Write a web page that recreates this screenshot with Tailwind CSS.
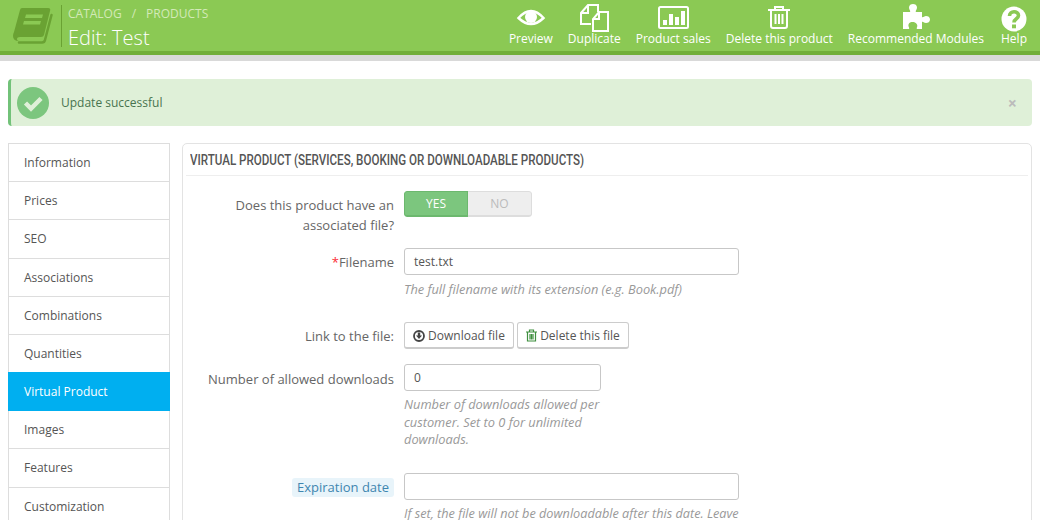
<!DOCTYPE html>
<html lang="en">
<head>
    <meta charset="UTF-8">
    <title>Edit: Test</title>
    <script src="https://cdn.jsdelivr.net/npm/@tailwindcss/browser@4"></script>
</head>
<body class="h-[520px] overflow-hidden bg-white font-['Open_Sans',sans-serif] text-[13px] text-[#666]">
    <!-- header -->
    <header class="h-[55px] flex items-start justify-between bg-[#8bc954] border-b-4 border-[#72ae3a]">
        <div class="flex items-start">
            <svg class="w-[42px] h-[37px] mt-[8px] ml-[12px]" viewBox="0 0 42 37">
                <path fill="none" stroke="#6aa233" stroke-width="2.500" stroke-linecap="round" d="M39.500 7 L33 32 Q32.500 34.500 30 34.500 H7"/>
                <path fill="#6aa233" d="M10 0 H36 Q39 0 38 3 L32 27 Q31.500 29 29 29 H8 Q5 29 5 31 Q5 33 8 33 H7 Q1 33 1 28 Q1 26 2 24 L8 2 Q8.500 0 10 0 Z"/>
                <path fill="#8bc954" d="M14 6.500 H31 L30 10 H13 Z M12 13 H29 L28 16.500 H11 Z"/>
            </svg>
            <div class="w-px h-[42px] bg-[#6aa233] mt-[5px] ml-[7px]"></div>
            <div class="ml-[6px] mt-[5px]">
                <div class="flex gap-[10px] text-[12px] leading-[17px] text-[#d3e9b8]"><span>CATALOG</span><span>/</span><span>PRODUCTS</span></div>
                <div class="text-[20px] font-light leading-[27px] mt-[2px] text-white">Edit: Test</div>
            </div>
        </div>
        <nav class="flex gap-[15px] pr-[13px] pt-[4px] text-[12px] leading-[16px] text-white">
            <a class="flex flex-col items-center">
                <svg class="w-[30px] h-[26px]" viewBox="0 0 30 26"><path fill="none" stroke="#fff" stroke-width="2.500" d="M2.500 14 Q15 0 27.500 14 Q15 26 2.500 14 Z"/><circle cx="15" cy="13" r="6" fill="#fff"/></svg>
                <span class="mt-[1px]">Preview</span>
            </a>
            <a class="flex flex-col items-center">
                <svg class="w-[30px] h-[28px] -mb-[2px]" viewBox="0 0 30 28"><path fill="none" stroke="#fff" stroke-width="2" d="M12 20 H2 V9 L9 1 H19 V8 M9 1 V9 H2 M14 27 V15 L20 8 H29 V27 Z M20 8 V15 H14"/></svg>
                <span class="mt-[1px]">Duplicate</span>
            </a>
            <a class="flex flex-col items-center">
                <svg class="w-[31px] h-[26px]" viewBox="0 0 31 26"><rect x="1" y="3" width="29" height="21" rx="1.500" fill="none" stroke="#fff" stroke-width="2"/><path fill="#fff" d="M5 16 h4 v5 h-4 Z M11 10 h4 v11 h-4 Z M17 13 h4 v8 h-4 Z M23 7 h4 v14 h-4 Z"/></svg>
                <span class="mt-[1px]">Product sales</span>
            </a>
            <a class="flex flex-col items-center">
                <svg class="w-[24px] h-[26px]" viewBox="0 0 24 26"><path fill="none" stroke="#fff" stroke-width="2" d="M1 6 H23 M4 6 V22 Q4 24 6 24 H18 Q20 24 20 22 V6 M8 6 V3 H16 V6"/><path stroke="#fff" stroke-width="2" d="M8.500 10 V20 M12 10 V20 M15.500 10 V20"/></svg>
                <span class="mt-[1px]">Delete this product</span>
            </a>
            <a class="flex flex-col items-center">
                <svg class="w-[28px] h-[26px]" viewBox="0 0 28 26"><path fill="#fff" d="M1 8 H8 C9 7 7 6 7 3.500 C7 1 9 0 11 0 C13 0 15 1 15 3.500 C15 6 13 7 14 8 H20 V13 C21 14 22 12 24 12 C26 12 28 13 28 15.500 C28 18 26 19 24 19 C22 19 21 17 20 18 V25 H15 C14 24 16 23 15 20.500 C14 18.500 12 18 10.500 18 C9 18 7 18.500 6.500 20.500 C6 23 8 24 7 25 H1 Z"/></svg>
                <span class="mt-[1px]">Recommended Modules</span>
            </a>
            <a class="flex flex-col items-center ml-[2px]">
                <svg class="w-[26px] h-[26px] mt-[2px] -mb-[2px]" viewBox="0 0 26 26"><circle cx="13" cy="13" r="12.500" fill="#fff"/><path fill="none" stroke="#8bc954" stroke-width="3.600" d="M8.500 10 C8.500 4.500 17.500 4.500 17.500 9.500 C17.500 13 13 12.500 13 16.500"/><rect x="11" y="18.500" width="4" height="3.800" fill="#8bc954"/></svg>
                <span class="mt-[1px]">Help</span>
            </a>
        </nav>
    </header>
    <div class="h-[6px] bg-[#d9d9d9]"></div>

    <main class="px-[8px] pt-[18px]">
        <!-- alert -->
        <div class="h-[47px] flex items-center bg-[#dff0d8] border-l-[3px] border-[#72c279] rounded-[4px] text-[12px] text-[#48744f]">
            <svg class="w-[32px] h-[32px] ml-[6px]" viewBox="0 0 32 32"><circle cx="16" cy="16" r="16" fill="#7cc67e"/><path fill="none" stroke="#dff0d8" stroke-width="4.500" d="M8.500 16 L14 21.500 L24 11.500"/></svg>
            <span class="ml-[12px]">Update successful</span>
            <span class="ml-auto mr-[15px] text-[16px] font-bold text-[#bbb]">×</span>
        </div>

        <div class="flex gap-[12px] mt-[17px]">
            <!-- tabs -->
            <ul class="w-[162px] h-[377px] shrink-0 border-x border-[#ddd] text-[12px] text-[#555]">
                <li class="h-[39.200px] flex items-center pl-[15px] pt-[1px] border-t border-b border-[#ddd]">Information</li>
                <li class="h-[38.200px] flex items-center pl-[15px] pt-[1px] border-b border-[#ddd]">Prices</li>
                <li class="h-[38.200px] flex items-center pl-[15px] pt-[1px] border-b border-[#ddd]">SEO</li>
                <li class="h-[38.200px] flex items-center pl-[15px] pt-[1px] border-b border-[#ddd]">Associations</li>
                <li class="h-[38.200px] flex items-center pl-[15px] pt-[1px] border-b border-[#ddd]">Combinations</li>
                <li class="h-[38.200px] flex items-center pl-[15px] pt-[1px] border-b border-[#ddd]">Quantities</li>
                <li class="h-[39.200px] -mt-px -mx-px flex items-center pl-[16px] bg-[#00aff0] text-white">Virtual Product</li>
                <li class="h-[38px] flex items-center pl-[15px] pt-[1px] border-b border-[#ddd]">Images</li>
                <li class="h-[38.200px] flex items-center pl-[15px] pt-[1px] border-b border-[#ddd]">Features</li>
                <li class="h-[38.200px] flex items-center pl-[15px] pt-[1px] border-b border-[#ddd]">Customization</li>
            </ul>

            <!-- panel -->
            <section class="flex-1 h-[420px] border border-[#e3e3e3] rounded-t-[5px] px-[3px]">
                <h3 class="h-[32px] flex items-center pl-[4px] pt-[2px] border-b border-[#eee] text-[15px] font-medium text-[#555] font-['Roboto',sans-serif]"><span class="inline-block origin-left scale-x-[.773] whitespace-nowrap">VIRTUAL PRODUCT (SERVICES, BOOKING OR DOWNLOADABLE PRODUCTS)</span></h3>

                <div class="flex mt-[15px] h-[43px]">
                    <label class="w-[208px] text-right leading-[20px] pt-[4px] pl-[40px]">Does this product have an associated file?</label>
                    <div class="ml-[10px] w-[128px] h-[26px] flex text-[12px] rounded-[3px] overflow-hidden">
                        <span class="w-[64px] flex items-center justify-center bg-[#7cc67e] border border-b-2 border-[#6cb86e] rounded-l-[3px] text-white">YES</span>
                        <span class="w-[64px] flex items-center justify-center bg-[#eee] border border-l-0 border-b-2 border-[#ddd] rounded-r-[3px] text-[#bbb]">NO</span>
                    </div>
                </div>

                <div class="flex mt-[14px] h-[50px]">
                    <label class="w-[208px] text-right leading-[29px]"><span class="text-red-500">*</span>Filename</label>
                    <div class="ml-[10px]">
                        <div class="w-[335px] h-[27px] pl-[9px] flex items-center border border-[#c7c7c7] rounded-[3px] text-[#555] text-[12px]">test.txt</div>
                        <p class="mt-[4px] text-[12.800px] leading-[20px] italic text-[#999] whitespace-nowrap">The full filename with its extension (e.g. Book.pdf)</p>
                    </div>
                </div>

                <div class="flex mt-[24px] h-[27px]">
                    <label class="w-[208px] text-right leading-[29px]">Link to the file:</label>
                    <div class="ml-[10px] flex gap-[3px] text-[#555] text-[12px]">
                        <a class="w-[110px] h-[27px] pt-[1px] flex items-center justify-center gap-[3px] border border-[#ccc] border-b-2 rounded-[3px]">
                            <svg class="w-[12px] h-[12px]" viewBox="0 0 12 12"><circle cx="6" cy="6" r="5" fill="none" stroke="#444" stroke-width="1.800"/><path fill="#444" d="M4.800 2.500 h2.400 v3 h1.800 L6 9 L3 5.500 h1.800 Z"/></svg>
                            Download file
                        </a>
                        <a class="w-[112px] h-[27px] pt-[1px] flex items-center justify-center gap-[3px] border border-[#ccc] border-b-2 rounded-[3px]">
                            <svg class="w-[11px] h-[13px]" viewBox="0 0 11 13"><path fill="none" stroke="#3f8f3f" stroke-width="1.200" d="M0 3 H11 M1.500 3 V12 H9.500 V3 M3.500 3 V1 H7.500 V3 M4 5 V10.500 M5.500 5 V10.500 M7 5 V10.500"/></svg>
                            Delete this file
                        </a>
                    </div>
                </div>

                <div class="flex mt-[15px] h-[85px]">
                    <label class="w-[208px] text-right leading-[31px] whitespace-nowrap">Number of allowed downloads</label>
                    <div class="ml-[10px]">
                        <div class="w-[197px] h-[27px] pl-[9px] flex items-center border border-[#c7c7c7] rounded-[3px] text-[#555] text-[12px]">0</div>
                        <p class="w-[205px] mt-[5px] text-[12.800px] leading-[17.500px] italic text-[#999]">Number of downloads allowed per customer. Set to 0 for unlimited downloads.</p>
                    </div>
                </div>

                <div class="flex mt-[24px]">
                    <div class="w-[208px] flex justify-end pt-[5px]">
                        <label class="h-[19px] px-[5px] flex items-center bg-[#e8f4fa] rounded-[3px] text-[#3f86b0]">Expiration date</label>
                    </div>
                    <div class="ml-[10px]">
                        <div class="w-[335px] h-[27px] border border-[#c7c7c7] rounded-[3px]"></div>
                        <p class="mt-[7px] text-[12.700px] leading-[13px] italic text-[#999] whitespace-nowrap">If set, the file will not be downloadable after this date. Leave</p>
                    </div>
                </div>
            </section>
        </div>
    </main>
</body>
</html>
